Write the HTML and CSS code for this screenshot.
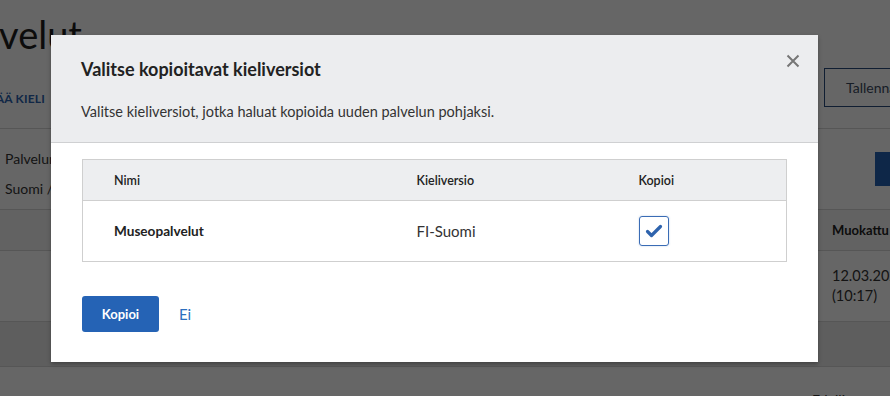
FILE: index.html
```html
<!DOCTYPE html>
<html lang="fi">
<head>
<meta charset="utf-8">
<title>Palvelut</title>
<link rel="stylesheet" href="styles.css">
</head>
<body>
<div class="page">
  <header class="top">
    <div class="top-left">
      <h1 class="page-title">Palvelut</h1>
      <a class="tab">LISÄÄ KIELI</a>
    </div>
    <div class="top-right"><button class="btn-outline">Tallenna</button></div>
  </header>
  <section class="info">
    <div class="info-left">
      <p>Palvelun kieli</p>
      <p>Suomi / Finska</p>
    </div>
    <div class="info-right"><button class="btn-solid">Julkaise</button></div>
  </section>
  <div class="bg-table">
    <div class="bg-row bg-head"><span></span><span class="bg-th">Muokattu</span></div>
    <div class="bg-row bg-data"><span></span><span class="bg-td">12.03.2020<br>(10:17)</span></div>
    <div class="bg-row bg-band"></div>
  </div>
  <footer class="bg-foot"><span>Edellinen</span></footer>
</div>

<div class="overlay">
  <div class="dialog" role="dialog">
    <div class="d-head">
      <h2 class="d-title">Valitse kopioitavat kieliversiot</h2>
      <p class="d-sub">Valitse kieliversiot, jotka haluat kopioida uuden palvelun pohjaksi.</p>
      <button class="close" aria-label="Sulje">
        <svg width="14" height="14" viewBox="0 0 14 14"><path d="M1.5 1.5 L12.5 12.5 M12.5 1.5 L1.5 12.5" stroke="#767676" stroke-width="2" fill="none"/></svg>
      </button>
    </div>
    <div class="d-body">
      <table class="versions">
        <colgroup><col class="c1"><col class="c2"><col class="c3"></colgroup>
        <thead>
          <tr><th>Nimi</th><th>Kieliversio</th><th>Kopioi</th></tr>
        </thead>
        <tbody>
          <tr>
            <td class="name">Museopalvelut</td>
            <td>FI-Suomi</td>
            <td><span class="check"><svg width="28" height="28" viewBox="0 0 28 28"><path d="M7.5 14.5 L11.5 18.5 L20.5 9.5" stroke="#2e63ad" stroke-width="3.2" fill="none" stroke-linecap="round" stroke-linejoin="round"/></svg></span></td>
          </tr>
        </tbody>
      </table>
      <div class="actions">
        <button class="primary">Kopioi</button>
        <a class="link">Ei</a>
      </div>
    </div>
  </div>
</div>
</body>
</html>
```

FILE: styles.css
```css
* { box-sizing: border-box; }
html, body { margin: 0; padding: 0; }
body {
  width: 890px;
  height: 396px;
  overflow: hidden;
  position: relative;
  font-family: Lato, "Open Sans", sans-serif;
  color: #222;
  background: #fff;
}
p { margin: 0; }
button { font-family: inherit; }

/* ---------- background page ---------- */
.page { width: 1000px; }

.top {
  display: grid;
  grid-template-columns: 824px 1fr;
  height: 129px;
  border-bottom: 1px solid #d6d6d6;
}
.page-title {
  margin: 15px 0 0 -51px;
  font-size: 38px;
  line-height: 38px;
  font-weight: 400;
  color: #1e1e1e;
}
.tab {
  display: block;
  margin: 38px 0 0 -21px;
  font-size: 12px;
  font-weight: 700;
  color: #2b63b0;
  letter-spacing: 0.2px;
}
.top-right { padding-top: 68px; }
.btn-outline {
  width: 140px;
  height: 39px;
  background: #fff;
  border: 1px solid #2a4d7e;
  color: #3b4a60;
  font-size: 14px;
  text-align: left;
  padding-left: 21px;
}

.info {
  display: grid;
  grid-template-columns: 875px 1fr;
  height: 81px;
  border-bottom: 1px solid #d6d6d6;
}
.info-left { padding: 15px 0 0 5px; font-size: 14px; color: #333; line-height: 30px; }
.info-right { padding-top: 23px; }
.btn-solid {
  width: 110px;
  height: 34px;
  background: #2462b5;
  border: none;
  color: #fff;
  font-size: 14px;
}

.bg-row {
  display: grid;
  grid-template-columns: 832px 1fr;
  border-bottom: 1px solid #d6d6d6;
}
.bg-head { height: 41px; background: #f6f6f6; align-items: center; }
.bg-th { font-size: 13px; font-weight: 700; color: #222; }
.bg-data { height: 71px; align-items: center; }
.bg-td { font-size: 14.5px; line-height: 20px; color: #333; }
.bg-band { height: 45px; background: #ececec; }
.bg-foot { padding: 24px 0 0 812px; font-size: 14px; color: #333; }

/* ---------- modal ---------- */
.overlay {
  position: absolute;
  inset: 0;
  background: rgba(0, 0, 0, 0.6);
}
.dialog {
  position: absolute;
  left: 51px;
  top: 35px;
  width: 767px;
  height: 327px;
  background: #fff;
  box-shadow: 0 2px 4px rgba(0, 0, 0, 0.3);
}
.d-head {
  position: relative;
  height: 108px;
  padding: 20px 31px 0 30px;
  background: #ecedef;
  border-bottom: 1px solid #cfd0d2;
}
.d-title {
  margin: 0;
  font-size: 18px;
  line-height: 28px;
  font-weight: 700;
  color: #222;
}
.d-sub {
  margin-top: 19px;
  font-size: 14.5px;
  line-height: 20px;
  color: #333;
}
.close {
  position: absolute;
  left: 735px;
  top: 19px;
  width: 14px;
  height: 14px;
  padding: 0;
  border: none;
  background: none;
  display: flex;
}

.d-body { padding: 16px 31px 0 31px; }
.versions {
  width: 705px;
  border-collapse: collapse;
  border: 1px solid #cfcfcf;
  table-layout: fixed;
}
.c1 { width: 303px; }
.c2 { width: 223px; }
.versions th {
  height: 41px;
  padding: 0 0 0 31px;
  background: #edeef0;
  border-bottom: 1px solid #cfcfcf;
  text-align: left;
  font-size: 12.5px;
  font-weight: 600;
  color: #222;
}
.versions th:last-child { padding-left: 30px; }
.versions td {
  height: 61px;
  padding: 0 0 0 31px;
  font-size: 15px;
  color: #333;
}
.versions td:last-child { padding-left: 30px; }
.versions td.name { font-size: 13.6px; font-weight: 700; color: #222; }
.check {
  display: flex;
  align-items: center;
  justify-content: center;
  width: 30px;
  height: 30px;
  border: 1.5px solid #3a6cb5;
  border-radius: 3px;
  box-shadow: 0 0 2px rgba(58, 108, 181, 0.35);
}

.actions {
  display: flex;
  align-items: center;
  gap: 20px;
  margin-top: 34px;
}
.primary {
  width: 77px;
  height: 36px;
  background: #2563b5;
  border: none;
  border-radius: 3px;
  color: #fff;
  font-size: 13px;
  font-weight: 700;
}
.link { font-size: 15px; color: #2b6fbe; }
```
